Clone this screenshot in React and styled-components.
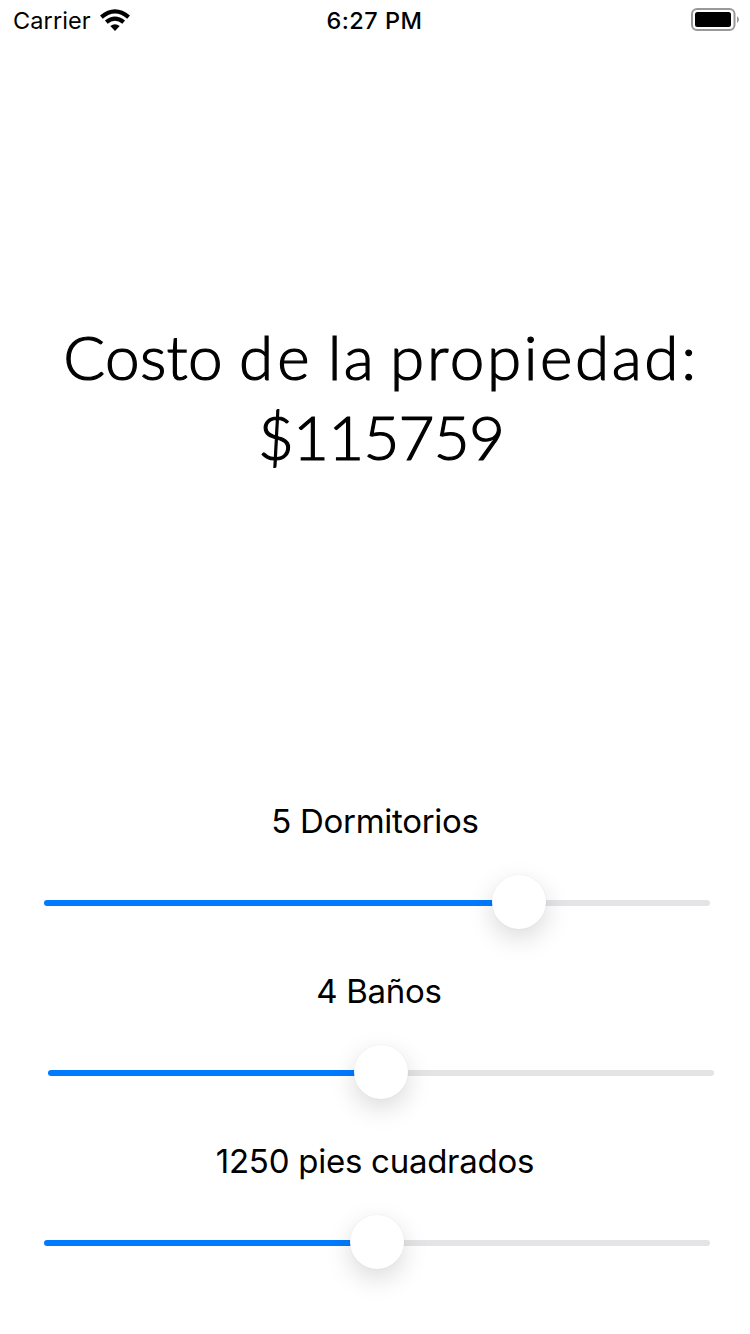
import React from "react";
import styled, { createGlobalStyle } from "styled-components";

const Global = createGlobalStyle`
  *{box-sizing:border-box}
  body{margin:0;background:#fff;color:#000;font-family:Inter,"Liberation Sans",sans-serif;overflow:hidden}
`;
const Screen = styled.main`
  width:750px;height:1334px;display:flex;flex-direction:column;background:#fff;
`;
const StatusBar = styled.header`
  height:40px;display:grid;grid-template-columns:1fr auto 1fr;align-items:center;
  padding:0 11px 0 13px;font-size:23.5px;
  svg{margin-bottom:2px;}
`;
const Carrier = styled.div`
  display:flex;align-items:center;gap:9px;line-height:42px;letter-spacing:0.1px;
`;
const Clock = styled.div`
  font-weight:550;letter-spacing:0.5px;line-height:42px;padding-right:3px;
`;
const Battery = styled.div`display:flex;justify-content:flex-end;`;
const Title = styled.h1`
  margin:276px 0 0;padding-left:12px;text-align:center;font-family:Lato,sans-serif;font-weight:300;
  font-size:62px;line-height:80px;white-space:nowrap;-webkit-text-stroke:1.2px #000;
`;
const Line = styled.span`
  display:block;letter-spacing:${p => p.$spacing}px;word-spacing:-7px;
`;
const Word = styled.span`
  letter-spacing:${p => p.$spacing}px;margin-right:${p => p.$gap}px;
`;
const Controls = styled.section`
  margin-top:auto;height:535px;display:flex;flex-direction:column;
`;
const Group = styled.div`
  height:170px;margin:0 -${p => p.$shift}px 0 ${p => p.$shift}px;display:flex;flex-direction:column;
`;
const Label = styled.label`
  height:44px;line-height:44px;text-align:center;font-size:33px;letter-spacing:${p => p.$spacing}px;
`;
const Slider = styled.div`
  margin:31px 40px 0 44px;width:666px;height:56px;display:flex;align-items:flex-start;padding-top:1px;
`;
const Track = styled.div`
  height:6px;margin-top:25px;border-radius:3px;background:${p => p.$filled ? "#007aff" : "#e4e4e6"};
  ${p => p.$filled ? `width:${p.$width}px;` : "flex:1;"}
`;
const Thumb = styled.div`
  width:54px;height:54px;margin:0 -3px;border-radius:50%;background:#fff;z-index:1;
  box-shadow:0 0 2px rgba(0,0,0,.06),0 9px 26px rgba(0,0,0,.15);
`;

const sliders = [
  { text: "5 Dormitorios", fill: 451, shift: 0, spacing: -0.3 },
  { text: "4 Baños", fill: 309, shift: 4, spacing: -0.3 },
  { text: "1250 pies cuadrados", fill: 309, shift: 0, spacing: -0.26 },
];

export default function App() {
  return (
    <Screen>
      <Global />
      <StatusBar>
        <Carrier>Carrier
          <svg width="30" height="22" viewBox="0 0 30 22">
            <g fill="none" stroke="#000" strokeWidth="4.2">
              <path d="M1.4 8.1Q15-3.4 28.6 8.1" />
              <path d="M6.3 13.2Q15 6 23.7 13.2" />
            </g>
            <path d="M10.3 17.1Q15 13.4 19.7 17.1L15 22Z" />
          </svg>
        </Carrier>
        <Clock>6:27 PM</Clock>
        <Battery>
          <svg width="48" height="24" viewBox="0 0 48 24">
            <rect x="1" y="1" width="42.5" height="21" rx="5" fill="none" stroke="#999" strokeWidth="2" />
            <rect x="4" y="4" width="36" height="15" rx="2.5" />
            <path d="M46 8Q50 11.5 46 15Z" fill="#999" />
          </svg>
        </Battery>
      </StatusBar>
      <Title>
        <Line $spacing={2.3}>
          <Word $spacing={0.3} $gap={4}>Costo</Word>{" "}
          <Word $spacing={4} $gap={2}>de</Word>{" "}
          <Word $spacing={2.3} $gap={2}>la</Word>{" "}
          <Word $spacing={2.6} $gap={0}>propiedad:</Word>
        </Line>
        <Line $spacing={-0.8}>$115759</Line>
      </Title>
      <Controls>
        {sliders.map(s => (
          <Group key={s.text} $shift={s.shift}>
            <Label $spacing={s.spacing}>{s.text}</Label>
            <Slider>
              <Track $filled $width={s.fill} />
              <Thumb />
              <Track />
            </Slider>
          </Group>
        ))}
      </Controls>
    </Screen>
  );
}
